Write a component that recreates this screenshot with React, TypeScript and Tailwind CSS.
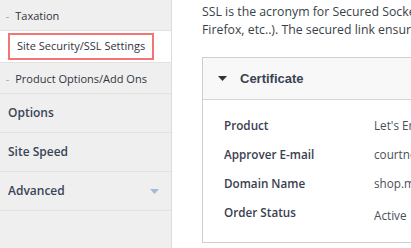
const SUB_ITEMS = ["Taxation", "Site Security/SSL Settings", "Product Options/Add Ons"];
const MAIN_ITEMS = ["Options", "Site Speed", "Advanced"];

const CERT_ROWS = [
  { label: "Product", value: "Let's Encrypt" },
  { label: "Approver E-mail", value: "courtney@example.com" },
  { label: "Domain Name", value: "shop.mystore.com" },
  { label: "Order Status", value: "Active" },
];

function Caret({ className }: { className?: string }) {
  return (
    <svg width="9" height="5" viewBox="0 0 9 5" className={className}>
      <path d="M0 0h9L4.5 5z" fill="currentColor" />
    </svg>
  );
}

export default function App() {
  return (
    <div
      className="flex h-[248px] w-[411px] overflow-hidden bg-white"
      style={{ fontFamily: '"Open Sans", sans-serif' }}
    >
      {/* Sidebar */}
      <aside className="w-[172px] shrink-0 border-r border-[#dcdcdc] bg-[#efefef]">
        {SUB_ITEMS.map((item) =>
          item === "Site Security/SSL Settings" ? (
            <div key={item} className="h-[32px] border-b border-[#e2e2e2] bg-white py-[2px] pl-[8px]">
              <div className="flex h-full w-[146px] items-center whitespace-nowrap border-2 border-[#f27475] pl-[7px] text-[11px] text-[#2f3540]">
                {item}
              </div>
            </div>
          ) : (
            <div
              key={item}
              className="flex h-[31px] items-center whitespace-nowrap border-b border-[#e2e2e2] pt-[2px] pl-[6px] text-[11px] text-[#2f3540]"
            >
              <span className="mr-[6px] text-[10px] text-[#9aa0a6]">-</span>
              {item}
            </div>
          ),
        )}
        {MAIN_ITEMS.map((item) => (
          <div
            key={item}
            className="flex h-[39px] items-center justify-between border-b border-[#e2e2e2] pl-[8px] pr-[12px] text-[12px] font-semibold text-[#3a4556]"
          >
            {item}
            {item === "Advanced" && <Caret className="text-[#a3bcd6]" />}
          </div>
        ))}
      </aside>

      {/* Content */}
      <main className="w-[600px] shrink-0 pl-[30px] pt-[3px]">
        <p className="text-[12.3px] leading-[18px] text-[#3a3f47]">
          <span className="block whitespace-nowrap">
            SSL is the acronym for Secured Sockets Layer, a protocol that creates a secure link between the server and the browser (Chrome,
          </span>
          <span className="block whitespace-nowrap">
            Firefox, etc..). The secured link ensures that all data passed between them remains private.
          </span>
        </p>

        <div className="mt-[18px] border border-[#cfcfcf]">
          <div className="flex h-[42px] items-center border-b border-[#d6d6d6] bg-[#f8f8f8] pl-[15px]">
            <Caret className="text-[#333]" />
            <span
              className="ml-[13px] text-[13px] font-bold text-[#3a4352]"
              style={{ fontFamily: '"Liberation Sans", sans-serif' }}
            >
              Certificate
            </span>
          </div>
          <div className="flex flex-col gap-[11px] bg-white pb-[20px] pl-[21px] pt-[17px]">
            {CERT_ROWS.map((row) => (
              <div key={row.label} className="flex h-[18px] items-center whitespace-nowrap text-[11.7px]">
                <span className="w-[150px] font-semibold text-[#3a4050]">{row.label}</span>
                <span className={row.label === "Order Status" ? "pt-[5px] text-[#4a4f57]" : "text-[#4a4f57]"}>
                  {row.value}
                </span>
              </div>
            ))}
          </div>
        </div>
      </main>
    </div>
  );
}
